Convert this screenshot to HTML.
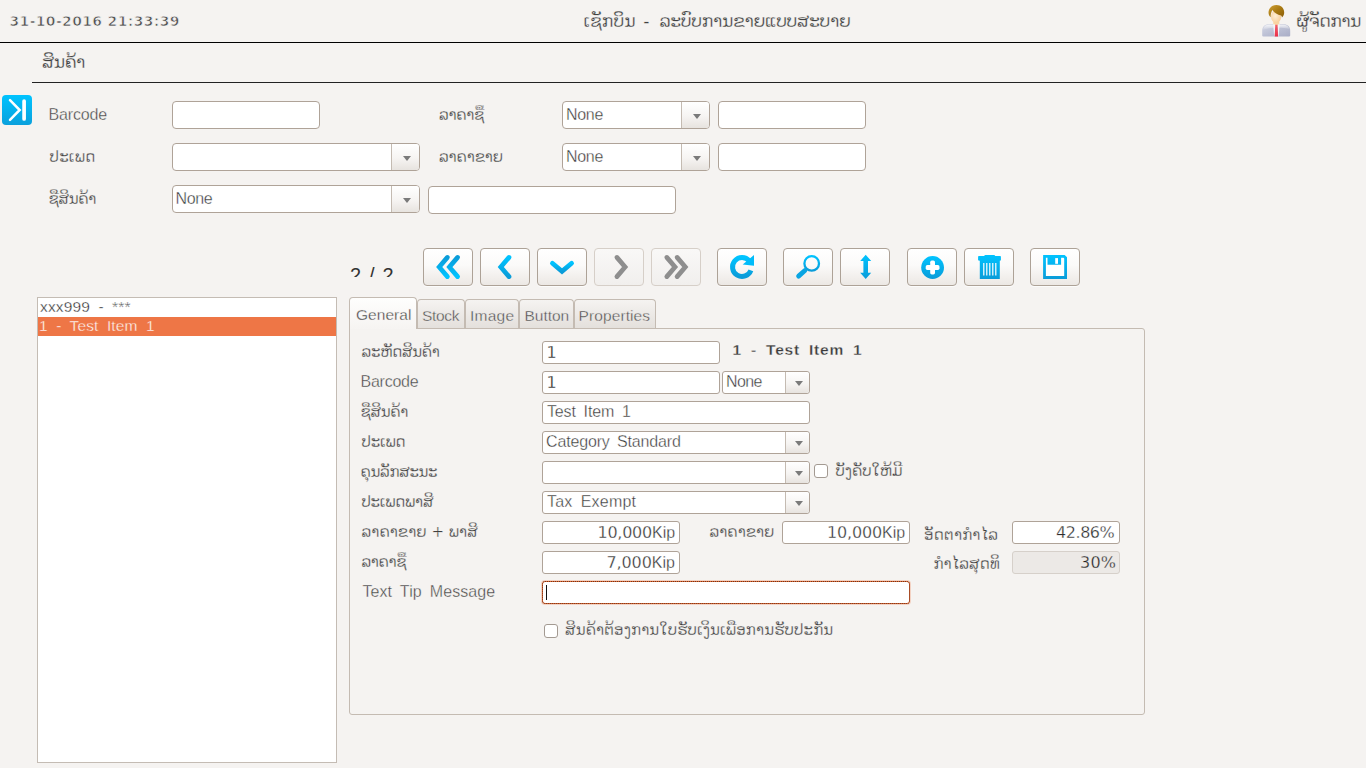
<!DOCTYPE html>
<html>
<head>
<meta charset="utf-8">
<title>ເຊັກບິນ - ລະບົບການຂາຍແບບສະບາຍ</title>
<style>
*{box-sizing:border-box;margin:0;padding:0}
html,body{width:1366px;height:768px;overflow:hidden;background:#f5f3f1}
body{position:relative;font-family:"Liberation Sans","DejaVu Sans",sans-serif;font-size:15px;color:#505050}
.a{position:absolute;white-space:nowrap}
.t{position:absolute;white-space:nowrap;line-height:20px}
.hl{position:absolute;height:1px;background:#000}
.inp{position:absolute;background:#fff;border:1px solid #afa398;border-radius:4px;height:28px}
.sel{position:absolute;background:#fff;border:1px solid #afa398;border-radius:4px;height:28px}
.sel i{position:absolute;right:0;top:0;bottom:0;width:28px;border-left:1px solid #c4bbb2;background:linear-gradient(#ffffff,#f6f4f2 55%,#e7e3df);border-radius:0 3px 3px 0}
.sel i:after{content:"";position:absolute;left:11px;top:12px;border:4px solid transparent;border-top:5px solid #7a7a7a;border-bottom:0}
.btn{position:absolute;top:248px;width:50px;height:38px;border:1px solid #ada297;border-radius:4px;background:linear-gradient(#ffffff,#fbfaf9 45%,#ece8e4);box-shadow:0 1px 0 rgba(255,255,255,.7)}
.btn.dis{border-color:#d6cfc8;background:linear-gradient(#f9f8f7,#f1efed);box-shadow:none}
.btn svg{position:absolute;left:-1px;top:-1px;width:50px;height:38px}
.tab{position:absolute;top:299px;height:29px;border:1px solid #c4bbb2;border-bottom:0;border-radius:4px 4px 0 0;background:linear-gradient(#f5f3f1,#e4e0dc)}
.tab.act{top:297px;height:32px;background:linear-gradient(#fefefd,#f6f4f2)}
.fi{height:23px;border-radius:3px}
.fs{height:23px;border-radius:3px}
.fs i{width:24px}
.fs i:after{left:9px;top:9px;border-width:4px;border-top-width:5px}
.cb{position:absolute;width:14px;height:14px;border:1px solid #a39a92;border-radius:3px;background:#fff}
.tm{position:relative;top:-.2em}
.kip{font-family:"Liberation Sans",sans-serif;letter-spacing:0}
</style>
</head>
<body>
<div class="hl" style="left:0;top:42px;width:1366px"></div>
<div class="hl" style="left:32px;top:82px;width:1334px;background:#222"></div>

<!-- user avatar -->
<svg class="a" style="left:1260px;top:3px" width="32" height="36" viewBox="0 0 32 36">
<defs>
<linearGradient id="uB" x1="0" y1="0" x2="1" y2="1"><stop offset="0" stop-color="#d3d6e4"/><stop offset=".5" stop-color="#bcc0d4"/><stop offset="1" stop-color="#a9adc6"/></linearGradient>
<linearGradient id="uG" x1="0" y1="0" x2="0" y2="1"><stop offset="0" stop-color="#fff" stop-opacity=".75"/><stop offset="1" stop-color="#fff" stop-opacity="0"/></linearGradient>
<radialGradient id="uF" cx=".42" cy=".45" r=".7"><stop offset="0" stop-color="#ffefd6"/><stop offset="1" stop-color="#f7c990"/></radialGradient>
<linearGradient id="uH" x1="0" y1="0" x2="1" y2="1"><stop offset="0" stop-color="#cfa036"/><stop offset=".5" stop-color="#a97a12"/><stop offset="1" stop-color="#8b5d08"/></linearGradient>
<linearGradient id="uT" x1="0" y1="0" x2="0" y2="1"><stop offset="0" stop-color="#f4606a"/><stop offset="1" stop-color="#ec2f48"/></linearGradient>
</defs>
<path d="M2.2 32.6 V27.4 C2.2 24.2 4.2 21.6 8 21.2 H24.4 C28.2 21.6 30.2 24.2 30.2 27.4 V32.6 Q30.2 33.5 29 33.5 H3.4 Q2.2 33.5 2.2 32.6Z" fill="url(#uB)"/>
<path d="M3 27 C3.2 24 5 22 8.2 21.8 H24.2 C27 22 28.8 23.6 29.3 26 C22 24.2 10 24.4 3 27Z" fill="url(#uG)"/>
<path d="M13.3 18.4 H19.3 V21.4 L16.4 23.4 L13.3 21.4Z" fill="#f9d6a4"/>
<path d="M13.2 21.2 L15 21.6 L14.7 33.5 H14.2 Z M19.6 21.2 L17.8 21.6 L18.1 33.5 H18.6Z" fill="#f4f6fb"/>
<path d="M15.3 21.7 H17.5 L18.1 33.5 H14.7Z" fill="url(#uT)"/>
<ellipse cx="16.1" cy="13.6" rx="5.2" ry="6.3" fill="url(#uF)"/>
<path d="M10.6 14.2 C9.2 13.2 8.3 11.2 8.6 8.6 C9 4.6 12.2 2 16.4 2 C21 2 24.2 5 24.2 9.6 C24.2 11.6 23.4 13.4 21.9 14.4 C22 13.6 21.7 12.8 21.1 12.4 C17.6 11.6 14.2 9.6 12.4 6.9 C11.2 8.8 10.6 11.4 10.6 14.2Z" fill="url(#uH)"/>
</svg>

<!-- side toggle icon -->
<div class="a" style="left:2px;top:95px;width:30px;height:30px;border-radius:4px;background:linear-gradient(#00c3ff,#0aa0dc)">
<svg width="30" height="30" viewBox="0 0 30 30"><path d="M8 5.2 L17.7 15 L8 24.8" fill="none" stroke="#fff" stroke-width="2.5" stroke-linecap="round" stroke-linejoin="miter"/><path d="M22.1 6 V24" stroke="#fff" stroke-width="3.7" stroke-linecap="round"/></svg>
</div>

<!-- filter rows -->
<div class="inp" style="left:172px;top:101px;width:148px"></div>
<div class="sel" style="left:562px;top:101px;width:148px"><i></i></div>
<div class="inp" style="left:718px;top:101px;width:148px"></div>
<div class="sel" style="left:172px;top:143px;width:248px"><i></i></div>
<div class="sel" style="left:562px;top:143px;width:148px"><i></i></div>
<div class="inp" style="left:718px;top:143px;width:148px"></div>
<div class="sel" style="left:172px;top:185px;width:248px"><i></i></div>
<div class="inp" style="left:428px;top:186px;width:248px"></div>

<!-- toolbar -->
<div class="a" style="left:350px;top:264px;height:13px;overflow:hidden;font-size:20px;line-height:22px;color:#333;letter-spacing:1.15px">2 / 2</div>
<svg width="0" height="0" style="position:absolute"><defs>
<linearGradient id="gA" x1="0" y1="0" x2="0" y2="1"><stop offset="0" stop-color="#00c3ff"/><stop offset="1" stop-color="#0a9cd9"/></linearGradient>
<linearGradient id="gB" x1="0" y1="0" x2="0" y2="1"><stop offset="0" stop-color="#0a9cd9"/><stop offset="1" stop-color="#00c3ff"/></linearGradient>
</defs></svg>
<div class="btn" style="left:423px"><svg viewBox="0 0 50 38"><path d="M24.4 9.4 L16.2 19 L24.4 28.6" fill="none" stroke="url(#gB)" stroke-width="4.7" stroke-linecap="round" stroke-linejoin="miter"/><path d="M34.6 9.4 L26.4 19 L34.6 28.6" fill="none" stroke="url(#gB)" stroke-width="4.7" stroke-linecap="round" stroke-linejoin="miter"/></svg></div>
<div class="btn" style="left:480px"><svg viewBox="0 0 50 38"><path d="M29.0 9.4 L20.8 19 L29.0 28.6" fill="none" stroke="url(#gA)" stroke-width="4.7" stroke-linecap="round" stroke-linejoin="miter"/></svg></div>
<div class="btn" style="left:537px"><svg viewBox="0 0 50 38"><path d="M15.4 15.2 L25 23.4 L34.6 15.2" fill="none" stroke="url(#gA)" stroke-width="4.7" stroke-linecap="round" stroke-linejoin="miter"/></svg></div>
<div class="btn dis" style="left:594px"><svg viewBox="0 0 50 38"><path d="M22.9 9.4 L31.1 19 L22.9 28.6" fill="none" stroke="#8e8e8e" stroke-width="4.7" stroke-linecap="round" stroke-linejoin="miter"/></svg></div>
<div class="btn dis" style="left:651px"><svg viewBox="0 0 50 38"><path d="M15.8 9.4 L24.0 19 L15.8 28.6" fill="none" stroke="#8e8e8e" stroke-width="4.7" stroke-linecap="round" stroke-linejoin="miter"/><path d="M26.1 9.4 L34.3 19 L26.1 28.6" fill="none" stroke="#8e8e8e" stroke-width="4.7" stroke-linecap="round" stroke-linejoin="miter"/></svg></div>
<div class="btn" style="left:717px"><svg viewBox="0 0 50 38"><path d="M33.9 22.4 A9.5 9.5 0 1 1 32.3 12.9" fill="none" stroke="url(#gA)" stroke-width="5"/><path d="M37 6.9 V17.8 L25.7 16.6 Z" fill="#00bcfa"/></svg></div>
<div class="btn" style="left:783px"><svg viewBox="0 0 50 38"><circle cx="28.7" cy="15.4" r="7.3" fill="none" stroke="url(#gA)" stroke-width="2.3"/><path d="M23.4 21.2 L21.6 22.8" stroke="#0aa5e2" stroke-width="2.6"/><path d="M21.9 22.5 L15.6 28.1" stroke="#0aa5e2" stroke-width="4.8" stroke-linecap="round"/></svg></div>
<div class="btn" style="left:840px"><svg viewBox="0 0 50 38"><path d="M25.7 6.8 L31.2 13.1 H28 V24.7 H31.2 L25.7 31 L20.2 24.7 H23.4 V13.1 H20.2 Z" fill="url(#gA)"/></svg></div>
<div class="btn" style="left:907px"><svg viewBox="0 0 50 38"><circle cx="25.6" cy="19.5" r="11.4" fill="url(#gA)"/><rect x="23.2" y="12.6" width="4.8" height="13.8" rx="1.6" fill="#fff"/><rect x="18.7" y="17.1" width="13.8" height="4.8" rx="1.6" fill="#fff"/></svg></div>
<div class="btn" style="left:964px"><svg viewBox="0 0 50 38"><path d="M14.1 8.6 Q14.1 8.1 15 8.1 H20.2 Q20.4 7 21.5 7 H29.9 Q31 7 31.2 8.1 H36 Q36.9 8.1 36.9 8.6 V12 Q36.9 12.7 35.8 12.7 V30.9 H15.8 V12.7 Q14.1 12.7 14.1 12 Z" fill="url(#gA)"/><path d="M19.8 14.9 V27.4 M22.8 14.9 V27.4 M25.8 14.9 V27.4 M28.8 14.9 V27.4 M31.8 14.9 V27.4" stroke="#fff" stroke-width="1.2"/></svg></div>
<div class="btn" style="left:1030px"><svg viewBox="0 0 50 38"><path d="M13.1 7 H34.6 L37 9.2 V30.9 H13.1 Z" fill="url(#gA)"/><path d="M15.9 9.8 H17.5 V16.7 H31.1 V9.8 H33.6 L34.2 10.4 V27.9 H15.9 Z" fill="#fff"/><rect x="25.2" y="10.1" width="2.8" height="5.7" fill="#fff"/></svg></div>


<!-- list -->
<div class="a" style="left:37px;top:297px;width:300px;height:466px;background:#fff;border:1px solid #c4bcb4"></div>
<div class="a" style="left:38px;top:317px;width:298px;height:19px;background:#ee7646"></div>

<!-- panel + tabs -->
<div class="a" style="left:349px;top:328px;width:796px;height:387px;border:1px solid #c4bbb2;border-radius:0 3px 3px 3px;background:#f5f3f1"></div>
<div class="tab" style="left:417px;width:48px"></div>
<div class="tab" style="left:465px;width:54px"></div>
<div class="tab" style="left:519px;width:55px"></div>
<div class="tab" style="left:574px;width:82px"></div>
<div class="tab act" style="left:349px;width:68px"></div>

<!-- form fields -->
<div class="inp fi" style="left:542px;top:341px;width:178px"></div>
<div class="inp fi" style="left:542px;top:371px;width:178px"></div>
<div class="sel fs" style="left:722px;top:371px;width:88px"><i></i></div>
<div class="inp fi" style="left:542px;top:401px;width:268px"></div>
<div class="sel fs" style="left:542px;top:431px;width:268px"><i></i></div>
<div class="sel fs" style="left:542px;top:461px;width:268px"><i></i></div>
<div class="cb" style="left:814px;top:464px"></div>
<div class="sel fs" style="left:542px;top:491px;width:268px"><i></i></div>
<div class="inp fi" style="left:542px;top:521px;width:138px"></div>
<div class="inp fi" style="left:782px;top:521px;width:128px"></div>
<div class="inp fi" style="left:1012px;top:521px;width:108px"></div>
<div class="inp fi" style="left:542px;top:551px;width:138px"></div>
<div class="inp fi" style="left:1012px;top:551px;width:108px;background:#ece9e6;border-color:#d6d0ca;box-shadow:none"></div>
<div class="inp fi" style="left:542px;top:581px;width:368px;border-color:#e4632a;box-shadow:0 0 0 1px rgba(240,150,110,.35)"><u style="position:absolute;left:-1px;top:-1px;right:-1px;bottom:-1px;border:1px dotted rgba(70,40,30,.75);border-radius:3px"></u><b style="position:absolute;left:3px;top:3px;width:1px;height:15px;background:#111"></b></div>
<div class="cb" style="left:544px;top:624px"></div>

<div class="t" id="date" style="left:9.50px;top:11.00px;font-family:'DejaVu Sans',sans-serif;font-size:14px;font-weight:bold;letter-spacing:0.334px;color:#505050;-webkit-text-stroke:0.75px #f5f3f1;">31-10-2016 21:33:39</div>
<div class="t" id="title" style="left:583.50px;top:10.90px;font-family:'DejaVu Sans','Liberation Sans',sans-serif;font-size:17.3px;letter-spacing:0.030px;color:#404040;-webkit-text-stroke:0.3px #f5f3f1;">ເຊັກບິນ</div>
<div class="t" id="title2" style="left:643.30px;top:10.90px;font-family:'DejaVu Sans','Liberation Sans',sans-serif;font-size:17.3px;letter-spacing:0.000px;color:#404040;-webkit-text-stroke:0.3px #f5f3f1;">-</div>
<div class="t" id="title3" style="left:659.40px;top:10.90px;font-family:'DejaVu Sans','Liberation Sans',sans-serif;font-size:17.3px;letter-spacing:-0.333px;color:#404040;-webkit-text-stroke:0.3px #f5f3f1;">ລະບົບການຂາຍແບບສະບາຍ</div>
<div class="t" id="user" style="left:1296.50px;top:10.71px;font-family:'DejaVu Sans','Liberation Sans',sans-serif;font-size:17.3px;letter-spacing:-0.543px;color:#404040;-webkit-text-stroke:0.3px #f5f3f1;">ຜູ້ຈັດການ</div>
<div class="t" id="sec" style="left:42.00px;top:51.80px;font-family:'DejaVu Sans','Liberation Sans',sans-serif;font-size:17.3px;letter-spacing:-0.440px;color:#404040;-webkit-text-stroke:0.3px #f5f3f1;">ສິນຄ້າ</div>
<div class="t" id="f1" style="left:48.50px;top:104.60px;font-family:'Liberation Sans','DejaVu Sans',sans-serif;font-size:16px;letter-spacing:-0.166px;color:#404040;-webkit-text-stroke:0.36px #f5f3f1;">Barcode</div>
<div class="t" id="f2" style="left:49.50px;top:146.50px;font-family:'DejaVu Sans','Liberation Sans',sans-serif;font-size:15px;letter-spacing:0.250px;color:#404040;-webkit-text-stroke:0.3px #f5f3f1;">ປະເພດ</div>
<div class="t" id="f3" style="left:48.50px;top:188.50px;font-family:'DejaVu Sans','Liberation Sans',sans-serif;font-size:15px;letter-spacing:-0.325px;color:#404040;-webkit-text-stroke:0.3px #f5f3f1;">ຊື<span class="tm">່</span>ສິນຄ້າ</div>
<div class="t" id="f4" style="left:439.00px;top:104.50px;font-family:'DejaVu Sans','Liberation Sans',sans-serif;font-size:15px;letter-spacing:-0.301px;color:#404040;-webkit-text-stroke:0.3px #f5f3f1;">ລາຄາຊື<span class="tm">້</span></div>
<div class="t" id="f5" style="left:439.00px;top:146.50px;font-family:'DejaVu Sans','Liberation Sans',sans-serif;font-size:15px;letter-spacing:-0.132px;color:#404040;-webkit-text-stroke:0.3px #f5f3f1;">ລາຄາຂາຍ</div>
<div class="t" id="n1" style="left:566.00px;top:104.60px;font-family:'Liberation Sans','DejaVu Sans',sans-serif;font-size:16px;letter-spacing:-0.298px;color:#333333;-webkit-text-stroke:0.36px #fff;">None</div>
<div class="t" id="n2" style="left:566.00px;top:146.60px;font-family:'Liberation Sans','DejaVu Sans',sans-serif;font-size:16px;letter-spacing:-0.298px;color:#333333;-webkit-text-stroke:0.36px #fff;">None</div>
<div class="t" id="n3" style="left:175.50px;top:188.60px;font-family:'Liberation Sans','DejaVu Sans',sans-serif;font-size:16px;letter-spacing:-0.333px;color:#333333;-webkit-text-stroke:0.36px #fff;">None</div>
<div class="t" id="l1" style="left:40.00px;top:296.50px;font-family:'Liberation Sans','DejaVu Sans',sans-serif;font-size:15.5px;letter-spacing:0.137px;color:#1c1c1c;-webkit-text-stroke:0.36px #fff;word-spacing:4px;">xxx999 - ***</div>
<div class="t" id="l2" style="left:39.00px;top:316.00px;font-family:'Liberation Sans','DejaVu Sans',sans-serif;font-size:15.5px;letter-spacing:0.116px;color:#fff;-webkit-text-stroke:0.36px #ee7646;word-spacing:4px;">1 - Test Item 1</div>
<div class="t" id="tb1" style="left:356.00px;top:305.30px;font-family:'Liberation Sans','DejaVu Sans',sans-serif;font-size:15.5px;letter-spacing:0.032px;color:#3a3a3a;-webkit-text-stroke:0.36px #f5f3f1;">General</div>
<div class="t" id="tb2" style="left:422.00px;top:305.50px;font-family:'Liberation Sans','DejaVu Sans',sans-serif;font-size:15.5px;letter-spacing:-0.300px;color:#484848;-webkit-text-stroke:0.36px #ece9e6;">Stock</div>
<div class="t" id="tb3" style="left:470.00px;top:305.50px;font-family:'Liberation Sans','DejaVu Sans',sans-serif;font-size:15.5px;letter-spacing:0.250px;color:#484848;-webkit-text-stroke:0.36px #ece9e6;">Image</div>
<div class="t" id="tb4" style="left:524.50px;top:305.50px;font-family:'Liberation Sans','DejaVu Sans',sans-serif;font-size:15.5px;letter-spacing:-0.020px;color:#484848;-webkit-text-stroke:0.36px #ece9e6;">Button</div>
<div class="t" id="tb5" style="left:578.50px;top:305.50px;font-family:'Liberation Sans','DejaVu Sans',sans-serif;font-size:15.5px;letter-spacing:0.105px;color:#484848;-webkit-text-stroke:0.36px #ece9e6;">Properties</div>
<div class="t" id="g1" style="left:361.50px;top:341.80px;font-family:'DejaVu Sans','Liberation Sans',sans-serif;font-size:15px;letter-spacing:-0.280px;color:#404040;-webkit-text-stroke:0.3px #f5f3f1;">ລະຫັດສິນຄ້າ</div>
<div class="t" id="g2" style="left:360.50px;top:371.80px;font-family:'Liberation Sans','DejaVu Sans',sans-serif;font-size:16px;letter-spacing:-0.248px;color:#404040;-webkit-text-stroke:0.36px #f5f3f1;">Barcode</div>
<div class="t" id="g3" style="left:360.50px;top:401.80px;font-family:'DejaVu Sans','Liberation Sans',sans-serif;font-size:15px;letter-spacing:-0.325px;color:#404040;-webkit-text-stroke:0.3px #f5f3f1;">ຊື<span class="tm">່</span>ສິນຄ້າ</div>
<div class="t" id="g4" style="left:361.50px;top:431.50px;font-family:'DejaVu Sans','Liberation Sans',sans-serif;font-size:15px;letter-spacing:-0.200px;color:#404040;-webkit-text-stroke:0.3px #f5f3f1;">ປະເພດ</div>
<div class="t" id="g5" style="left:360.50px;top:461.80px;font-family:'DejaVu Sans','Liberation Sans',sans-serif;font-size:15px;letter-spacing:-0.333px;color:#404040;-webkit-text-stroke:0.3px #f5f3f1;">ຄຸນລັກສະນະ</div>
<div class="t" id="g6" style="left:361.50px;top:491.80px;font-family:'DejaVu Sans','Liberation Sans',sans-serif;font-size:15px;letter-spacing:-0.257px;color:#404040;-webkit-text-stroke:0.3px #f5f3f1;">ປະເພດພາສີ</div>
<div class="t" id="g7" style="left:361.50px;top:521.80px;font-family:'DejaVu Sans','Liberation Sans',sans-serif;font-size:15px;letter-spacing:0.028px;color:#404040;-webkit-text-stroke:0.3px #f5f3f1;">ລາຄາຂາຍ + ພາສີ</div>
<div class="t" id="g8" style="left:361.50px;top:551.80px;font-family:'DejaVu Sans','Liberation Sans',sans-serif;font-size:15px;letter-spacing:-0.398px;color:#404040;-webkit-text-stroke:0.3px #f5f3f1;">ລາຄາຊື<span class="tm">້</span></div>
<div class="t" id="g9" style="left:362.50px;top:581.50px;font-family:'Liberation Sans','DejaVu Sans',sans-serif;font-size:16px;letter-spacing:0.075px;color:#404040;-webkit-text-stroke:0.36px #f5f3f1;word-spacing:3.5px;">Text Tip Message</div>
<div class="t" id="g10" style="left:709.50px;top:521.80px;font-family:'DejaVu Sans','Liberation Sans',sans-serif;font-size:15px;letter-spacing:-0.001px;color:#404040;-webkit-text-stroke:0.3px #f5f3f1;">ລາຄາຂາຍ</div>
<div class="t" id="g11" style="left:924.00px;top:524.50px;font-family:'DejaVu Sans','Liberation Sans',sans-serif;font-size:15px;letter-spacing:0.250px;color:#404040;-webkit-text-stroke:0.3px #f5f3f1;">ອັດຕາກຳໄລ</div>
<div class="t" id="g12" style="left:933.50px;top:554.40px;font-family:'DejaVu Sans','Liberation Sans',sans-serif;font-size:15px;letter-spacing:0.118px;color:#404040;-webkit-text-stroke:0.3px #f5f3f1;">ກຳໄລສຸດທິ</div>
<div class="t" id="g13" style="left:835.50px;top:461.00px;font-family:'DejaVu Sans','Liberation Sans',sans-serif;font-size:15px;letter-spacing:-0.060px;color:#404040;-webkit-text-stroke:0.3px #f5f3f1;">ບັງຄັບໃຫ້ມີ</div>
<div class="t" id="g14" style="left:565.00px;top:620.30px;font-family:'DejaVu Sans','Liberation Sans',sans-serif;font-size:15px;letter-spacing:0.114px;color:#404040;-webkit-text-stroke:0.3px #f5f3f1;">ສິນຄ້າຕ້ອງການໃບຮັບເງິນເພື<span class="tm">່</span>ອການຮັບປະກັນ</div>
<div class="t" id="ttl" style="left:732.50px;top:340.00px;font-family:'Liberation Sans','DejaVu Sans',sans-serif;font-size:15.5px;font-weight:bold;letter-spacing:0.785px;color:#3a3a3a;-webkit-text-stroke:0.3px #f5f3f1;word-spacing:4px;">1 - Test Item 1</div>
<div class="t" id="v1" style="left:546.50px;top:343.40px;font-family:'DejaVu Sans',sans-serif;font-size:16px;letter-spacing:0.000px;color:#222;-webkit-text-stroke:0.3px #fff;">1</div>
<div class="t" id="v2" style="left:546.50px;top:373.40px;font-family:'DejaVu Sans',sans-serif;font-size:16px;letter-spacing:0.000px;color:#222;-webkit-text-stroke:0.3px #fff;">1</div>
<div class="t" id="v3" style="left:547.00px;top:402.40px;font-family:'Liberation Sans','DejaVu Sans',sans-serif;font-size:16px;letter-spacing:-0.140px;color:#333333;-webkit-text-stroke:0.36px #fff;word-spacing:3.5px;">Test Item 1</div>
<div class="t" id="v4" style="left:546.00px;top:432.41px;font-family:'Liberation Sans','DejaVu Sans',sans-serif;font-size:16px;letter-spacing:-0.157px;color:#333333;-webkit-text-stroke:0.36px #fff;word-spacing:3px;">Category Standard</div>
<div class="t" id="v5" style="left:547.00px;top:492.41px;font-family:'Liberation Sans','DejaVu Sans',sans-serif;font-size:16px;letter-spacing:0.214px;color:#333333;-webkit-text-stroke:0.36px #fff;word-spacing:3.5px;">Tax Exempt</div>
<div class="t" id="v6" style="left:726.00px;top:372.40px;font-family:'Liberation Sans','DejaVu Sans',sans-serif;font-size:16px;letter-spacing:-0.635px;color:#333333;-webkit-text-stroke:0.36px #fff;">None</div>
<div class="t" id="p1" style="left:597.50px;top:522.80px;font-family:'DejaVu Sans',sans-serif;font-size:16px;letter-spacing:-0.257px;color:#333333;-webkit-text-stroke:0.3px #fff;">10,000<span class="kip">Kip</span></div>
<div class="t" id="p2" style="left:827.00px;top:522.80px;font-family:'DejaVu Sans',sans-serif;font-size:16px;letter-spacing:-0.150px;color:#333333;-webkit-text-stroke:0.3px #fff;">10,000<span class="kip">Kip</span></div>
<div class="t" id="p3" style="left:606.50px;top:552.80px;font-family:'DejaVu Sans',sans-serif;font-size:16px;letter-spacing:-0.113px;color:#333333;-webkit-text-stroke:0.3px #fff;">7,000<span class="kip">Kip</span></div>
<div class="t" id="p4" style="left:1056.00px;top:522.80px;font-family:'DejaVu Sans',sans-serif;font-size:16px;letter-spacing:-0.440px;color:#2c2c2c;-webkit-text-stroke:0.3px #fff;">42.86%</div>
<div class="t" id="p5" style="left:1080.00px;top:552.80px;font-family:'DejaVu Sans',sans-serif;font-size:16px;letter-spacing:0.250px;color:#222;-webkit-text-stroke:0.3px #ece9e6;">30%</div>
</body>
</html>
